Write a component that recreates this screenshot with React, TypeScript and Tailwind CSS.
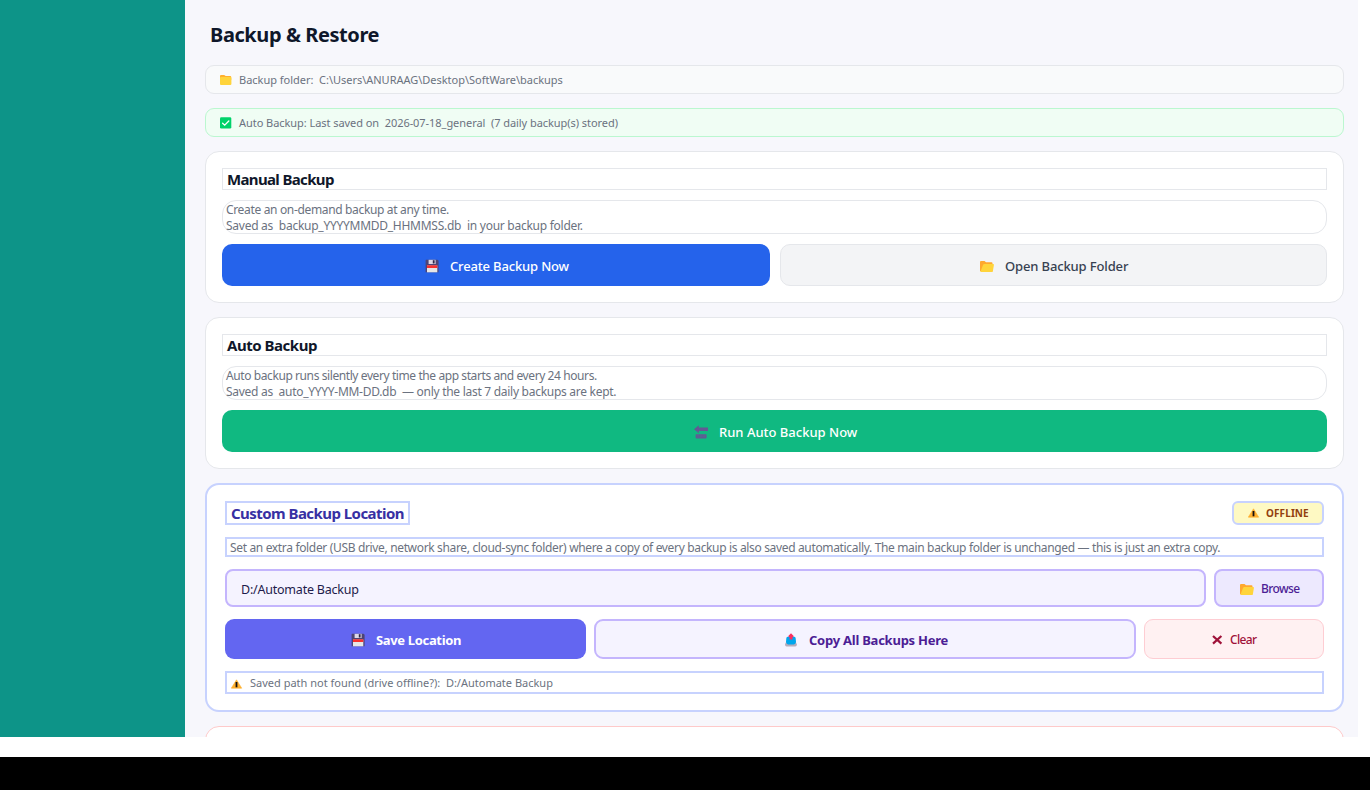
import type { ReactNode } from "react";

interface ChildrenProps {
  children: ReactNode;
}

export default function App() {
  return (
    <div className="flex h-[790px] w-[1370px] flex-col overflow-hidden bg-black font-['Noto_Sans','Open_Sans',sans-serif]">
      <div className="flex h-[757px] bg-white pr-3 pb-5">
        <aside className="w-[185px] shrink-0 bg-[#0d9488]" />
        <main className="flex min-w-0 flex-1 flex-col gap-3.5 overflow-hidden bg-[#f7f7fc] pr-3.5 pl-5">
          <h1 className="mb-[-14px] h-[65px] shrink-0 pt-[22px] pl-[5px] text-[20px] leading-[26px] font-bold tracking-[-0.42px] whitespace-pre text-[#0f172a]">
            Backup &amp; Restore
          </h1>
          <div className="flex h-[29px] shrink-0 items-center rounded-[9px] border border-[#e5e7eb] bg-[#f9fafb] pt-0.5 pl-[14px] text-[11px] text-[#6b7280]">
            <FolderIcon />
            <span className="ml-[7px] tracking-[-0.02px] whitespace-pre">
              {"Backup folder:  C:\\Users\\ANURAAG\\Desktop\\SoftWare\\backups"}
            </span>
          </div>
          <div className="flex h-[29px] shrink-0 items-center rounded-[9px] border border-[#bbf7d0] bg-[#f0fdf4] pt-0.5 pl-[14px] text-[11px] text-[#6b7280]">
            <CheckIcon />
            <span className="ml-[7px] tracking-[-0.055px] whitespace-pre">
              {"Auto Backup: Last saved on  2026-07-18_general  (7 daily backup(s) stored)"}
            </span>
          </div>

          <Card>
            <CardTitle>
              <span className="tracking-[-0.65px]">Manual Backup</span>
            </CardTitle>
            <CardText>
              <p className="tracking-[-0.34px]">Create an on-demand backup at any time.</p>
              <p className="tracking-[-0.26px]">{"Saved as  backup_YYYYMMDD_HHMMSS.db  in your backup folder."}</p>
            </CardText>
            <div className="flex gap-2.5">
              <button className="flex h-[42px] w-[548px] items-center rounded-[10px] bg-[#2563eb] pt-[3px] pl-[203px] text-[13px] font-medium text-white">
                <FloppyIcon />
                <span className="ml-[11px] tracking-[-0.16px] whitespace-pre">Create Backup Now</span>
              </button>
              <button className="flex h-[42px] w-[547px] items-center rounded-[10px] border border-[#e5e7eb] bg-[#f3f4f6] pt-[3px] pl-[199px] text-[13px] font-medium text-[#374151]">
                <OpenFolderIcon />
                <span className="ml-[11px] tracking-[-0.14px] whitespace-pre">Open Backup Folder</span>
              </button>
            </div>
          </Card>

          <Card>
            <CardTitle>
              <span className="tracking-[-0.47px]">Auto Backup</span>
            </CardTitle>
            <CardText>
              <p className="tracking-[-0.41px]">Auto backup runs silently every time the app starts and every 24 hours.</p>
              <p className="tracking-[-0.28px]">{"Saved as  auto_YYYY-MM-DD.db  — only the last 7 daily backups are kept."}</p>
            </CardText>
            <button className="flex h-[42px] items-center rounded-[10px] bg-[#10b981] pt-[3px] pl-[472px] text-[13px] font-medium text-white">
              <EndArrowIcon />
              <span className="ml-[11px] whitespace-pre">Run Auto Backup Now</span>
            </button>
          </Card>

          <section className="flex h-[229px] shrink-0 flex-col gap-3 rounded-[14px] border-2 border-[#c7d2fe] bg-white px-[18px] py-4">
            <div className="flex justify-between">
              <h2 className="h-6 w-[185px] border-2 border-[#c7d2fe] pl-1 text-[15px] leading-[21px] font-bold tracking-[-0.55px] whitespace-pre text-[#3730a3]">
                Custom Backup Location
              </h2>
              <div className="flex h-6 w-[92px] items-center rounded-md border-2 border-[#c7d2fe] bg-[#fef9c3] pl-[14px] text-[10px] font-bold text-[#92400e]">
                <WarningIcon />
                <span className="ml-[6px] tracking-[0.1px]">OFFLINE</span>
              </div>
            </div>
            <p className="h-5 border-2 border-[#c7d2fe] pl-[3px] text-[12px] leading-[17px] tracking-[-0.342px] whitespace-pre text-[#6b7280]">
              Set an extra folder (USB drive, network share, cloud-sync folder) where a copy of every backup is also saved automatically. The main backup folder is unchanged — this is just an extra copy.
            </p>
            <div className="flex gap-2">
              <div className="flex h-[38px] w-[981px] items-center rounded-lg border-2 border-[#c4b5fd] bg-[#f5f3ff] pt-1 pl-[14px] text-[12.5px] tracking-[-0.22px] whitespace-pre text-[#1e1b4b]">
                D:/Automate Backup
              </div>
              <button className="flex h-[38px] w-[110px] items-center rounded-lg border-2 border-[#c4b5fd] bg-[#ede9fe] pt-0.5 pl-6 text-[12px] font-medium text-[#4c1d95]">
                <OpenFolderIcon />
                <span className="ml-[7px] tracking-[-0.6px]">Browse</span>
              </button>
            </div>
            <div className="flex gap-2">
              <button className="flex h-10 w-[361px] items-center rounded-[9px] bg-[#6366f1] pt-[3px] pl-[126px] text-[13px] font-bold text-white">
                <FloppyIcon />
                <span className="ml-[11px] tracking-[-0.34px] whitespace-pre">Save Location</span>
              </button>
              <button className="flex h-10 w-[542px] items-center rounded-[9px] border-2 border-[#c4b5fd] bg-[#f5f3ff] pt-[3px] pl-[188px] text-[13px] font-bold text-[#4c1d95]">
                <OutboxIcon />
                <span className="ml-[11px] tracking-[-0.24px] whitespace-pre">Copy All Backups Here</span>
              </button>
              <button className="flex h-10 w-[180px] items-center rounded-[9px] border border-[#fecdd3] bg-[#fff1f2] pt-0.5 pl-[66px] text-[12px] font-medium text-[#9f1239]">
                <CrossIcon />
                <span className="ml-[7px] tracking-[-0.65px]">Clear</span>
              </button>
            </div>
            <div className="flex h-[23px] items-center border-2 border-[#c7d2fe] pt-0.5 pl-1 text-[11px] text-[#6b7280]">
              <WarningIcon />
              <span className="ml-[7px] whitespace-pre">{"Saved path not found (drive offline?):  D:/Automate Backup"}</span>
            </div>
          </section>

          <section className="h-[150px] shrink-0 rounded-[14px] border border-[#fecaca] bg-white" />
        </main>
      </div>
    </div>
  );
}

const Card = ({ children }: ChildrenProps) => (
  <section className="flex h-[152px] shrink-0 flex-col gap-2.5 rounded-[14px] border border-[#e5e7eb] bg-white p-4">
    {children}
  </section>
);

const CardTitle = ({ children }: ChildrenProps) => (
  <h2 className="h-[22px] border border-[#e5e7eb] pl-1 text-[15px] leading-[21px] font-bold whitespace-pre text-[#0f172a]">
    {children}
  </h2>
);

const CardText = ({ children }: ChildrenProps) => (
  <div className="h-[34px] rounded-[14px] border border-[#e5e7eb] pt-px pl-[3px] text-[12px] leading-4 whitespace-pre text-[#6b7280]">
    {children}
  </div>
);

const FolderIcon = () => (
  <svg className="mb-px h-3 w-3 shrink-0" viewBox="0 0 12 12">
    <path d="M0 2A1 1 0 0 1 1 1H4.2L5.7 2H10.2A1 1 0 0 1 11.2 3V6H0Z" fill="#ffb02e" />
    <rect x="0" y="3" width="11.4" height="8" rx="1" fill="#ffd43b" />
  </svg>
);

const OpenFolderIcon = () => (
  <svg className="mb-px h-3.5 w-3.5 shrink-0" viewBox="0 0 14 14">
    <path d="M0 3A1 1 0 0 1 1 2H4.5L6 3.2H11.5A1 1 0 0 1 12.5 4.2V12.5H1A1 1 0 0 1 0 11.5Z" fill="#ffa82e" />
    <path d="M4.4 5H13.2Q14.1 5 13.9 6L12.9 12Q12.8 13 11.8 13H1.2Q.5 13 .7 12L3 5.9Q3.4 5 4.4 5Z" fill="#ffd43b" />
  </svg>
);

const CheckIcon = () => (
  <svg className="mb-px h-3 w-3 shrink-0" viewBox="0 0 12 12">
    <rect x="0" y="0.3" width="11.3" height="11.3" rx="1.3" fill="#00d26a" />
    <path d="M2.6 6.3L4.7 8.2L8.8 4" fill="none" stroke="#fff" strokeWidth="1.3" strokeLinecap="round" />
  </svg>
);

const FloppyIcon = () => (
  <svg className="mb-px h-3.5 w-3.5 shrink-0" viewBox="0 0 14 14">
    <path d="M1 .8H12.5L13.6 1.8V13.3H.6V1.2Z" fill="#4d4475" />
    <path d="M3.6 .8H10.6V5H3.6Z" fill="#ded9e7" />
    <path d="M7.8 1.2H9.6V4.5H7.8Z" fill="#2f2648" />
    <path d="M2 6.5H12.3V13.3H2Z" fill="#e6e6e6" />
    <path d="M2 6.3H12.3V9H2Z" fill="#f8312f" />
  </svg>
);

const EndArrowIcon = () => (
  <svg className="mb-px h-3.5 w-3.5 shrink-0" viewBox="0 0 14 14">
    <path d="M0 4.3L4.8 .3V2.6H14V6H4.8V8.3Z" fill="#635994" />
    <rect x="1.6" y="9.2" width="11" height="4.2" rx="0.8" fill="#635994" />
    <path d="M3 10.6H5M3 12.2H5M6.3 12.4V10.6L7.7 12.2V10.5M9.3 10.6H10.5V12.2H9.3Z" fill="none" stroke="#4b7490" strokeWidth="0.6" />
  </svg>
);

const OutboxIcon = () => (
  <svg className="mb-px h-3.5 w-3.5 shrink-0" viewBox="0 0 14 14">
    <path d="M2.6 8L1 11.3Q1 13.5 2.6 13.5H11.2Q13 13.5 12.8 11.3L11.3 8Z" fill="#b4acbc" />
    <path d="M3.6 3.8H10.4Q11.6 4 11.7 5.5L12 9Q11.6 11.2 9.8 11.5H4.2Q2.4 11.2 2 9L2.3 5.5Q2.4 4 3.6 3.8Z" fill="#00a6ed" />
    <path d="M7 .3L9.7 3.1Q9.9 4.2 8.5 4.1V6.4H5.5V4.1Q4.1 4.2 4.3 3.1Z" fill="#f92f60" />
  </svg>
);

const WarningIcon = () => (
  <svg className="h-3 w-3 shrink-0" viewBox="0 0 12 12">
    <path d="M5.5 1.8L10.7 10.2H.3Z" fill="#ffb02e" stroke="#ffb02e" strokeWidth="0.6" strokeLinejoin="round" />
    <path d="M5.5 4V9.3" fill="none" stroke="#151010" strokeWidth="1.8" />
  </svg>
);

const CrossIcon = () => (
  <svg className="h-3 w-3 shrink-0" viewBox="0 0 12 12">
    <path d="M2 2L10.4 9.6M10.4 2L2 9.6" fill="none" stroke="#9f1239" strokeWidth="2.2" />
  </svg>
);
